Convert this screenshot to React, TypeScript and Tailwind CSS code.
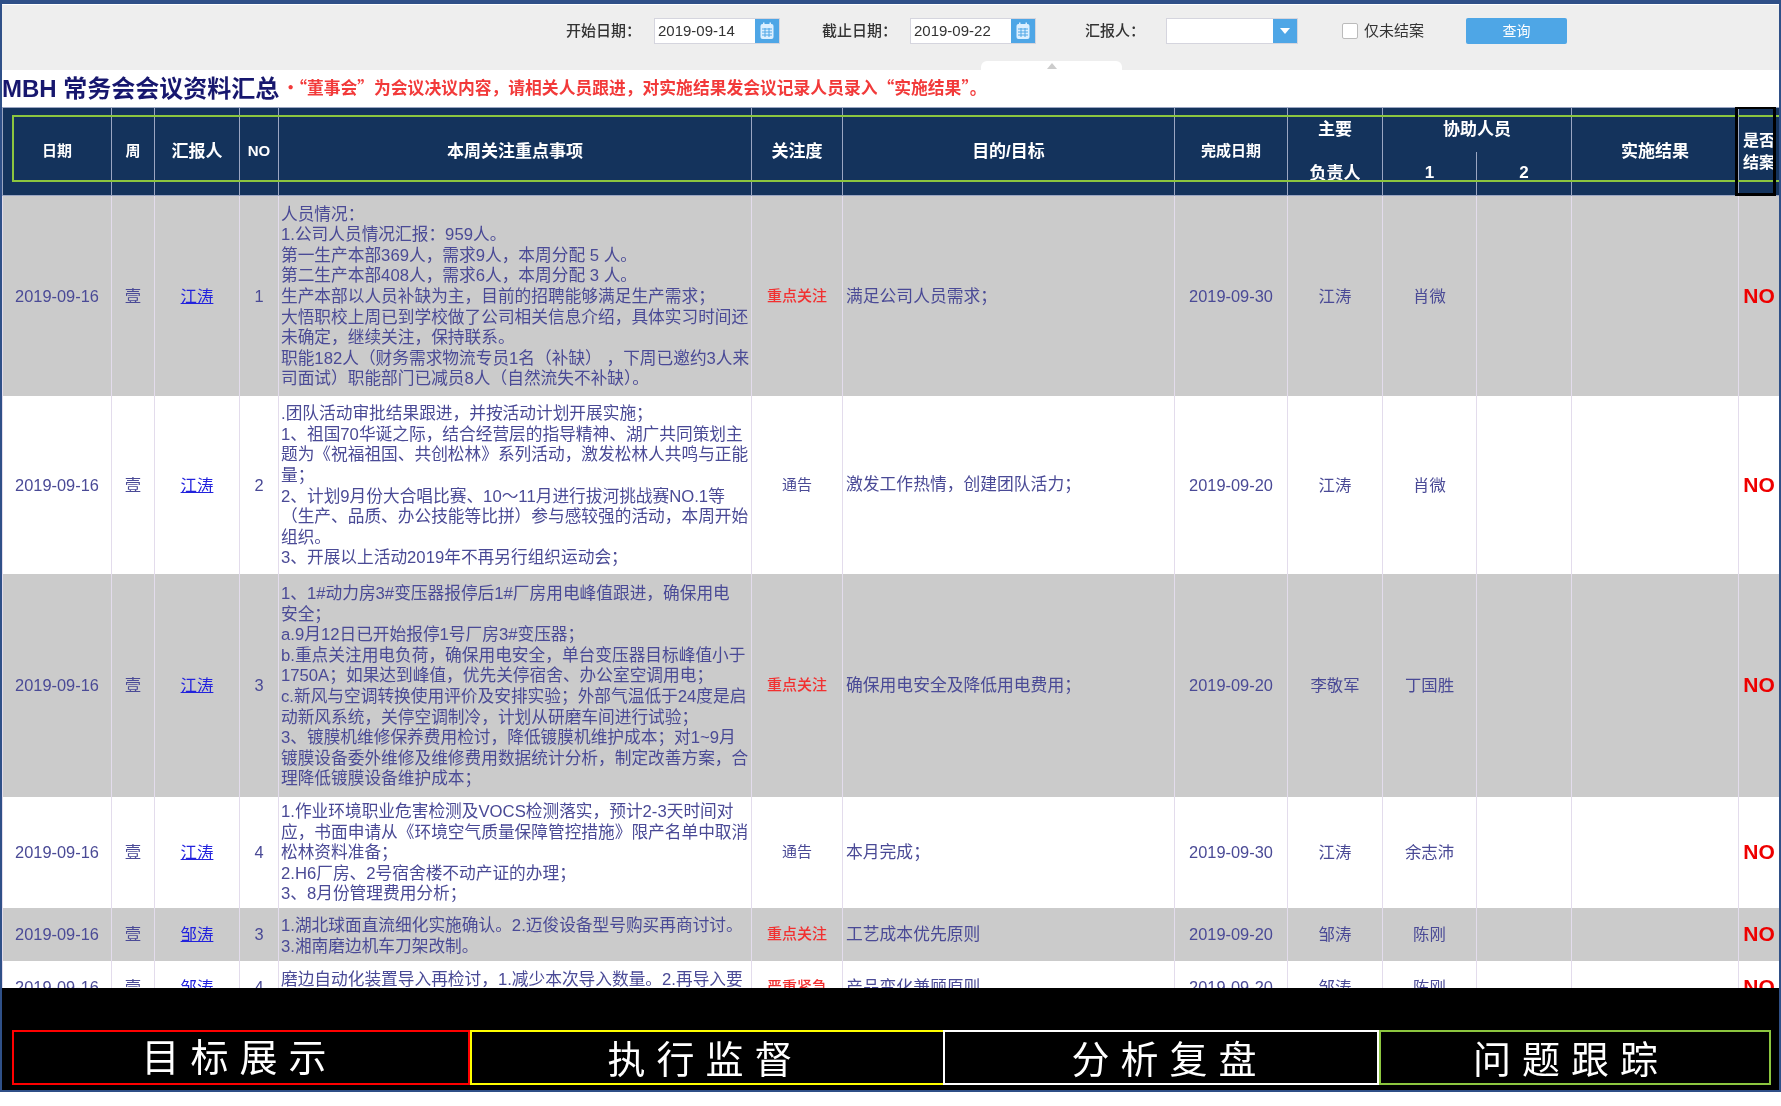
import React from "react";

const CJK = '"Liberation Sans","Noto Sans CJK SC",sans-serif';
const CJK_ONLY = '"Noto Sans CJK SC",sans-serif';

type Row = {
  bg: string;
  h: string;
  pad: string;
  no: string;
  rep: string;
  lines: string[];
  focus: string;
  red: boolean;
  goal: string;
  end: string;
  owner: string;
  helper: string;
};

const rows: Row[] = [
  {
    bg: "bg-[#cbcbcb]",
    h: "h-[200px]",
    pad: "pt-[3px]",
    no: "1",
    rep: "江涛",
    lines: [
      "人员情况：",
      "1.公司人员情况汇报：959人。",
      "第一生产本部369人，需求9人，本周分配 5 人。",
      "第二生产本部408人，需求6人，本周分配 3 人。",
      "生产本部以人员补缺为主，目前的招聘能够满足生产需求；",
      "大悟职校上周已到学校做了公司相关信息介绍，具体实习时间还",
      "未确定，继续关注，保持联系。",
      "职能182人（财务需求物流专员1名（补缺） ，下周已邀约3人来",
      "司面试）职能部门已减员8人（自然流失不补缺）。",
    ],
    focus: "重点关注",
    red: true,
    goal: "满足公司人员需求；",
    end: "2019-09-30",
    owner: "江涛",
    helper: "肖微",
  },
  {
    bg: "bg-white",
    h: "h-[178px]",
    pad: "pt-[4px]",
    no: "2",
    rep: "江涛",
    lines: [
      ".团队活动审批结果跟进，并按活动计划开展实施；",
      "1、祖国70华诞之际，结合经营层的指导精神、湖广共同策划主",
      "题为《祝福祖国、共创松林》系列活动，激发松林人共鸣与正能",
      "量；",
      "2、计划9月份大合唱比赛、10～11月进行拔河挑战赛NO.1等",
      "（生产、品质、办公技能等比拼）参与感较强的活动，本周开始",
      "组织。",
      "3、开展以上活动2019年不再另行组织运动会；",
    ],
    focus: "通告",
    red: false,
    goal: "激发工作热情，创建团队活力；",
    end: "2019-09-20",
    owner: "江涛",
    helper: "肖微",
  },
  {
    bg: "bg-[#cbcbcb]",
    h: "h-[223px]",
    pad: "pt-[4px]",
    no: "3",
    rep: "江涛",
    lines: [
      "1、1#动力房3#变压器报停后1#厂房用电峰值跟进，确保用电",
      "安全；",
      "a.9月12日已开始报停1号厂房3#变压器；",
      "b.重点关注用电负荷，确保用电安全，单台变压器目标峰值小于",
      "1750A；如果达到峰值，优先关停宿舍、办公室空调用电；",
      "c.新风与空调转换使用评价及安排实验；外部气温低于24度是启",
      "动新风系统，关停空调制冷，计划从研磨车间进行试验；",
      "3、镀膜机维修保养费用检讨，降低镀膜机维护成本；对1~9月",
      "镀膜设备委外维修及维修费用数据统计分析，制定改善方案，合",
      "理降低镀膜设备维护成本；",
    ],
    focus: "重点关注",
    red: true,
    goal: "确保用电安全及降低用电费用；",
    end: "2019-09-20",
    owner: "李敬军",
    helper: "丁国胜",
  },
  {
    bg: "bg-white",
    h: "h-[111px]",
    pad: "pt-[3px]",
    no: "4",
    rep: "江涛",
    lines: [
      "1.作业环境职业危害检测及VOCS检测落实，预计2-3天时间对",
      "应，书面申请从《环境空气质量保障管控措施》限产名单中取消",
      "松林资料准备；",
      "2.H6厂房、2号宿舍楼不动产证的办理；",
      "3、8月份管理费用分析；",
    ],
    focus: "通告",
    red: false,
    goal: "本月完成；",
    end: "2019-09-30",
    owner: "江涛",
    helper: "余志沛",
  },
  {
    bg: "bg-[#cbcbcb]",
    h: "h-[53px]",
    pad: "pt-[5px]",
    no: "3",
    rep: "邹涛",
    lines: ["1.湖北球面直流细化实施确认。2.迈俊设备型号购买再商讨讨。", "3.湘南磨边机车刀架改制。"],
    focus: "重点关注",
    red: true,
    goal: "工艺成本优先原则",
    end: "2019-09-20",
    owner: "邹涛",
    helper: "陈刚",
  },
  {
    bg: "bg-white",
    h: "h-[53px]",
    pad: "pt-[7px]",
    no: "4",
    rep: "邹涛",
    lines: ["磨边自动化装置导入再检讨，1.减少本次导入数量。2.再导入要", "求确认。"],
    focus: "严重紧急",
    red: true,
    goal: "产品变化兼顾原则",
    end: "2019-09-20",
    owner: "邹涛",
    helper: "陈刚",
  },
];

function Calendar() {
  return (
    <span className="flex h-full w-[24px] items-center justify-center bg-[#4ea6e6]">
      <svg width="14" height="18" viewBox="0 0 14 18">
        <rect x="0.5" y="2" width="13" height="15" rx="2" fill="#dcefff" />
        <rect x="3" y="0.5" width="1.5" height="3" fill="#dcefff" />
        <rect x="9.5" y="0.5" width="1.5" height="3" fill="#dcefff" />
        <path d="M2 7h10M2 10h10M2 13h10M5 6v9M9 6v9" stroke="#4ea6e6" strokeWidth="1" />
      </svg>
    </span>
  );
}

function DateField({ value }: { value: string }) {
  return (
    <div className="flex h-[26px] w-[126px] items-center border border-[#d5d5de] bg-white">
      <span className="flex-1 pl-[3px] text-[15px] font-normal text-[#333]">{value}</span>
      <Calendar />
    </div>
  );
}

const th = "border border-[#9ba6c2] text-center align-middle font-bold text-white";
const lg = "text-[17px]";
const sm = "text-[15px]";
const td = "border-x border-[#e3dcec] text-center align-middle text-[#4a4a96]";

function Tab({ label, cls, box }: { label: string; cls: string; box: string }) {
  return (
    <div className={`flex items-center justify-center border-[2px] ${cls} ${box}`}>
      <span className="text-[38px] font-normal leading-none tracking-[11px] text-white">{label}</span>
    </div>
  );
}

export default function App() {
  return (
    <div className="h-[1106px] w-[1781px] overflow-hidden bg-white blur-[0.5px]" style={{ fontFamily: CJK }}>
      <div className="relative flex h-[1092px] flex-col overflow-hidden border-x-2 border-t-4 border-b-2 border-[#2f5088]">
        {/* filter bar */}
        <div className="relative flex h-[66px] shrink-0 items-start border-t border-white bg-[#eeeeee] pt-[13px] text-[15px] font-medium text-[#333]">
          <div className="ml-[564px] flex h-[26px] items-center gap-[21px]">
            <span className="w-[67px] whitespace-nowrap">开始日期：</span>
            <DateField value="2019-09-14" />
          </div>
          <div className="ml-[42px] flex h-[26px] items-center gap-[21px]">
            <span className="w-[67px] whitespace-nowrap">截止日期：</span>
            <DateField value="2019-09-22" />
          </div>
          <div className="ml-[49px] flex h-[26px] items-center gap-[27px]">
            <span className="w-[54px] whitespace-nowrap">汇报人：</span>
            <div className="flex h-[26px] w-[132px] items-center justify-end border border-[#d5d5de] bg-white">
              <span className="flex h-full w-[24px] items-center justify-center bg-[#4ea6e6]">
                <span className="h-0 w-0 border-x-[5px] border-t-[6px] border-x-transparent border-t-white" />
              </span>
            </div>
          </div>
          <div className="ml-[44px] flex h-[26px] items-center gap-[6px]">
            <span className="h-[16px] w-[16px] rounded-[2px] border border-[#bbb] bg-white" />
            <span className="whitespace-nowrap text-[15px] font-normal">仅未结案</span>
          </div>
          <button className="ml-[42px] h-[26px] w-[101px] rounded-[2px] bg-[#4ea6e6] text-[14px] font-normal text-white">查询</button>
          <div className="absolute bottom-0 left-[979px] flex h-[9px] w-[141px] items-center justify-center rounded-t-[6px] bg-white">
            <span className="h-0 w-0 border-x-[5px] border-b-[6px] border-x-transparent border-b-[#ccc]" />
          </div>
        </div>

        {/* title */}
        <div className="flex h-[37px] shrink-0 items-center whitespace-nowrap bg-white">
          <span className="text-[24px] font-bold text-[#17176e]">MBH 常务会会议资料汇总</span>
          <span className="ml-[3px] pb-[2px] text-[16.8px] font-bold text-[#f23a3a]" style={{ fontFamily: CJK_ONLY }}>
            •<span className="-ml-[9px]">“董事会”为会议决议内容，请相关人员跟进，对实施结果发会议记录人员录入“实施结果”。</span>
          </span>
        </div>

        {/* table */}
        <div className="relative min-h-0 flex-1 overflow-hidden">
          <table className="w-[1777px] table-fixed border-collapse">
            <colgroup>
              <col className="w-[109px]" />
              <col className="w-[43px]" />
              <col className="w-[85px]" />
              <col className="w-[39px]" />
              <col className="w-[473px]" />
              <col className="w-[91px]" />
              <col className="w-[332px]" />
              <col className="w-[113px]" />
              <col className="w-[95px]" />
              <col className="w-[94px]" />
              <col className="w-[95px]" />
              <col className="w-[167px]" />
              <col className="w-[41px]" />
            </colgroup>
            <thead className="bg-[#14335c]">
              <tr className="h-[44px]">
                <th rowSpan={2} className={`${th} ${sm}`}>日期</th>
                <th rowSpan={2} className={`${th} ${sm}`}>周</th>
                <th rowSpan={2} className={`${th} ${lg}`}>汇报人</th>
                <th rowSpan={2} className={`${th} ${sm}`}>NO</th>
                <th rowSpan={2} className={`${th} ${lg}`}>本周关注重点事项</th>
                <th rowSpan={2} className={`${th} ${lg}`}>关注度</th>
                <th rowSpan={2} className={`${th} ${lg}`}>目的/目标</th>
                <th rowSpan={2} className={`${th} ${sm}`}>完成日期</th>
                <th className={`${th} ${lg} border-b-0`}>主要</th>
                <th colSpan={2} className={`${th} ${lg} border-b-0`}>协助人员</th>
                <th rowSpan={2} className={`${th} ${lg}`}>实施结果</th>
                <th rowSpan={2} className={`${th} text-[16px] leading-[22px]`}>是否<br />结案</th>
              </tr>
              <tr className="h-[44px]">
                <th className={`${th} ${lg} border-t-0 align-bottom leading-[17px]`}>负责人</th>
                <th className={`${th} ${lg} border-t-0 align-bottom leading-[18px]`}>1</th>
                <th className={`${th} ${lg} border-t-0 align-bottom leading-[18px]`}>2</th>
              </tr>
            </thead>
            <tbody className="text-[16.4px]">
              {rows.map((r, i) => (
                <tr key={i} className={`${r.bg} ${r.h}`}>
                  <td className={`${td} pt-[1px]`}>2019-09-16</td>
                  <td className={`${td} pt-[1px]`}>壹</td>
                  <td className={`${td} pt-[1px]`}>
                    <a href="#" className="text-[#2222dd] underline">{r.rep}</a>
                  </td>
                  <td className={`${td} pt-[1px]`}>{r.no}</td>
                  <td className={`${td} ${r.pad} overflow-hidden whitespace-nowrap pl-[2px] text-left text-[16.7px] leading-[20.6px]`}>
                    {r.lines.map((l, j) => (
                      <div key={j}>{l}</div>
                    ))}
                  </td>
                  <td className={`${td} pt-[1px] text-[15px] ${r.red ? "font-medium text-[#f23030]" : ""}`}>{r.focus}</td>
                  <td className={`${td} pt-[1px] pl-[3px] text-left text-[16.8px]`}>{r.goal}</td>
                  <td className={`${td} pt-[1px]`}>{r.end}</td>
                  <td className={`${td} pt-[1px]`}>{r.owner}</td>
                  <td className={`${td} pt-[1px]`}>{r.helper}</td>
                  <td className={td}></td>
                  <td className={td}></td>
                  <td className={`${td} text-[21px] font-bold text-[#ee0000]`}>NO</td>
                </tr>
              ))}
            </tbody>
          </table>
          {/* annotation frames that lie over the table */}
          <div className="pointer-events-none absolute left-[10px] right-0 top-[8px] h-[67px] border-2 border-r-0 border-[#8cc63f]" />
          <div className="pointer-events-none absolute left-[1733px] top-[-1px] h-[90px] w-[41px] border-[3px] border-black" />
        </div>

        {/* bottom tabs */}
        <div className="h-[102px] shrink-0 bg-black pl-[10px] pr-[8px] pt-[42px]">
          <div className="grid h-[55px] grid-cols-[458px_473px_436px_392px]">
            <Tab label="目标展示" cls="border-[#ff0000]" box="pr-[3px]" />
            <Tab label="执行监督" cls="border-[#ffff00] border-r-0" box="pr-[4px] pt-[4px]" />
            <Tab label="分析复盘" cls="border-white" box="pl-[17px] pt-[4px]" />
            <Tab label="问题跟踪" cls="border-[#8cc63f]" box="pr-[8px] pt-[4px]" />
          </div>
        </div>
      </div>
    </div>
  );
}
